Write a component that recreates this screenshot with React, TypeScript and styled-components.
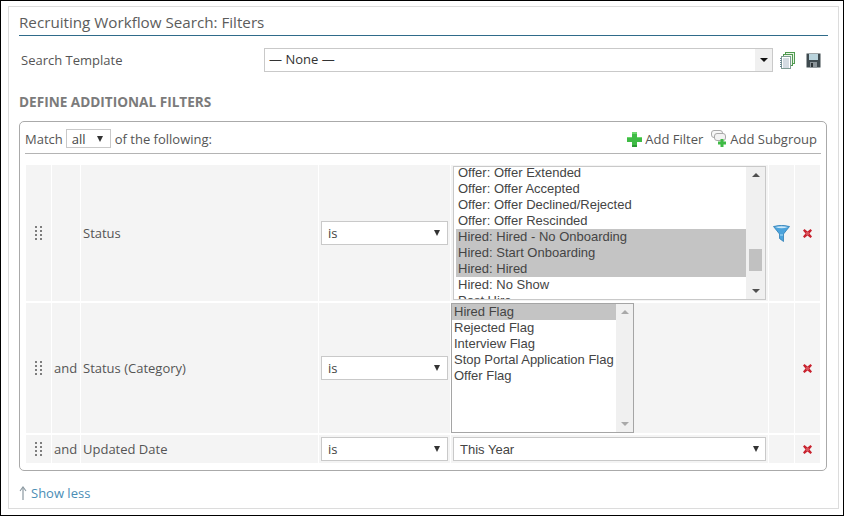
import styled, { createGlobalStyle } from 'styled-components'

const GlobalStyle = createGlobalStyle`
  html, body {
    margin: 0;
    padding: 0;
    background: #fff;
  }
  * {
    box-sizing: border-box;
  }
`;

const Page = styled.div`
  width: 844px;
  height: 516px;
  border: 1px solid #000;
  padding: 5px 4px 6px 7px;
  background: #fff;
  font-family: "Open Sans", sans-serif;
  font-size: 13px;
  color: #555;
`;

const Card = styled.div`
  height: 100%;
  border: 1px solid #dcdcdc;
  padding: 6px 10px 0 10px;
`;

const Title = styled.div`
  height: 23px;
  border-bottom: 1px solid #2f6b8a;
  font-size: 15.2px;
  line-height: 19px;
  color: #5c5c5c;
`;

const TemplateRow = styled.div`
  display: flex;
  align-items: center;
  margin-top: 12px;
  height: 24px;
  padding-left: 2px;
`;

const TemplateLabel = styled.div`
  width: 243px;
  color: #555;
`;

const TemplateIcons = styled.div`
  display: flex;
  align-items: center;
  gap: 11px;
  margin-left: 7px;
`;

const SectionHeading = styled.div`
  margin-top: 21px;
  font-size: 13.6px;
  line-height: 18px;
  font-weight: 700;
  color: #7b7b7b;
`;

const Panel = styled.div`
  margin-top: 10px;
  width: 808px;
  height: 350px;
  border: 1px solid #aaa;
  border-radius: 5px;
  padding: 0 5px;
`;

const PanelHead = styled.div`
  display: flex;
  align-items: center;
  justify-content: space-between;
  height: 32px;
  border-bottom: 1px solid #b4b4b4;
  padding-top: 2px;
`;

const MatchText = styled.div`
  display: flex;
  align-items: center;
  gap: 3px;
`;

const HeadActions = styled.div`
  display: flex;
  align-items: center;
  padding-right: 4px;
`;

const HeadAction = styled.span<{ $gap: number }>`
  display: flex;
  align-items: center;
  gap: ${props => props.$gap}px;
  margin-left: 8px;
`;

const Rows = styled.div`
  display: flex;
  flex-direction: column;
  row-gap: 2px;
  margin: 11px 0 0 1px;
`;

const Row = styled.div<{ $height: number }>`
  display: grid;
  grid-template-columns: 25px 28px 237px 131px 317px 25px 25px;
  column-gap: 1px;
  height: ${props => props.$height}px;
`;

const Cell = styled.div<{ $center?: boolean }>`
  display: flex;
  align-items: center;
  justify-content: ${props => (props.$center ? 'center' : 'flex-start')};
  background: #f4f4f4;
  overflow: hidden;
`;

const TextCell = styled(Cell)`
  padding-left: 2px;
  color: #555;
`;

const SelectCell = styled(Cell)`
  justify-content: center;
`;

const ValueCell = styled(Cell)`
  padding-left: 2px;
`;

const ListCell = styled(Cell)`
  align-items: flex-start;
`;

const SelectBox = styled.div<{ $width: number; $height?: number; $arial?: boolean }>`
  display: flex;
  align-items: center;
  justify-content: space-between;
  flex: none;
  width: ${props => props.$width}px;
  height: ${props => props.$height ?? 24}px;
  border: 1px solid #c9c9c9;
  background: #fff;
  padding: 0 ${props => (props.$arial ? 6 : 7)}px 0 6px;
  font-family: ${props => (props.$arial ? '"Liberation Sans", Arial, sans-serif' : 'inherit')};
  color: #444;
`;

const TemplateSelect = styled(SelectBox)`
  padding: 0 0 0 4px;
  color: #333;
`;

const TemplateValue = styled.span`
  padding-bottom: 2px;
`;

const ArrowBox = styled.span`
  display: flex;
  align-items: center;
  justify-content: center;
  width: 17px;
  height: 100%;
  background: #f0f0f0;
`;

const Arrow = styled.span`
  width: 0;
  height: 0;
  border-left: 3px solid transparent;
  border-right: 3px solid transparent;
  border-top: 6px solid #333;
`;

const SmallArrow = styled(Arrow)`
  border-left-width: 4px;
  border-right-width: 4px;
  border-top-width: 4px;
  border-top-color: #111;
`;

const MatchSelect = styled(SelectBox)`
  padding: 0 7px 0 5px;
  margin-right: 1px;
`;

const ListBox = styled.div<{ $width: number; $height: number; $dark?: boolean }>`
  display: flex;
  width: ${props => props.$width}px;
  height: ${props => props.$height}px;
  margin-top: ${props => (props.$dark ? 0 : 1)}px;
  margin-left: ${props => (props.$dark ? 0 : 2)}px;
  border: 1px solid ${props => (props.$dark ? '#a5a5a5' : '#c9c9c9')};
  background: #fff;
  overflow: hidden;
`;

const Options = styled.div<{ $offset: number; $inset: number }>`
  flex: 1;
  min-width: 0;
  margin-top: ${props => props.$offset}px;
  padding-left: ${props => props.$inset}px;
  font-family: "Liberation Sans", Arial, sans-serif;
  color: #444;
`;

const Option = styled.div<{ $selected?: boolean }>`
  height: 16px;
  line-height: 16px;
  padding-left: 2px;
  white-space: nowrap;
  background: ${props => (props.$selected ? '#c4c4c4' : 'transparent')};
`;

const Scrollbar = styled.div<{ $width: number }>`
  display: flex;
  flex-direction: column;
  justify-content: space-between;
  align-items: center;
  flex: none;
  width: ${props => props.$width}px;
  background: #f0f0f0;
`;

const ScrollTrack = styled.div`
  display: flex;
  flex: 1;
  width: 13px;
  flex-direction: column;
`;

const ScrollThumb = styled.div`
  width: 13px;
  height: 22px;
  margin-top: 66px;
  background: #c1c1c1;
`;

const ScrollButton = styled.span<{ $up?: boolean; $faded?: boolean }>`
  display: block;
  flex: none;
  margin: 6px 0;
  width: 0;
  height: 0;
  border-left: 4px solid transparent;
  border-right: 4px solid transparent;
  ${props =>
    props.$up
      ? `border-bottom: 4px solid ${props.$faded ? '#a9a9a9' : '#505050'};`
      : `border-top: 4px solid ${props.$faded ? '#a9a9a9' : '#505050'};`}
`;

const ShowLess = styled.div`
  display: flex;
  align-items: center;
  gap: 4px;
  margin-top: 12px;
  color: #4b8db5;
  line-height: 20px;
`;

function CopyIcon() {
  return (
    <svg width="15" height="17" viewBox="0 0 15 17">
      <rect x="5.5" y="0.5" width="9" height="11" fill="#e8f3e6" stroke="#4f9a4f" />
      <rect x="3.5" y="2.5" width="9" height="11" fill="#eef6ec" stroke="#4f9a4f" />
      <rect x="1.5" y="4.5" width="9" height="12" fill="#fff" stroke="#7f9c94" />
      <path d="M3 7h6M3 9h6M3 11h6M3 13h6M3 15h6" stroke="#a9b8c5" />
      <path d="M1 6v10" stroke="#6d8592" strokeDasharray="1 1" strokeWidth="2" />
    </svg>
  );
}

function SaveIcon() {
  return (
    <svg width="15" height="15" viewBox="0 0 15 15">
      <path d="M0.5 0.5h14v14h-14z" fill="#3f4a4f" />
      <rect x="3" y="1" width="9" height="6" fill="#b9d3dc" />
      <rect x="4" y="9" width="7" height="5.5" fill="#8b9499" />
      <rect x="5" y="10" width="2" height="4" fill="#2c3336" />
    </svg>
  );
}

function PlusIcon() {
  return (
    <svg width="15" height="16" viewBox="0 0 15 16">
      <path d="M5 1h5v5h5v5h-5v5H5v-5H0V6h5z" fill="#3fbb45" />
      <path d="M5 1h5v2H5zM0 6h5v1H0zM10 6h5v1h-5z" fill="#6cd86c" />
      <path d="M5 14h5v2H5z" fill="#2c9a34" />
    </svg>
  );
}

function SubgroupIcon() {
  return (
    <svg width="17" height="17" viewBox="0 0 17 17">
      <rect x="0.5" y="0.5" width="11" height="7" rx="2.5" fill="#f6f6f6" stroke="#a9a9a9" />
      <rect x="3.5" y="3.5" width="11" height="7" rx="2.5" fill="#f2f2f2" stroke="#a9a9a9" />
      <path d="M9.5 9h3v2.5H15v3h-2.5V17h-3v-2.5H7v-3h2.5z" fill="#3fbb45" />
    </svg>
  );
}

function FunnelIcon() {
  return (
    <svg width="17" height="17" viewBox="0 0 17 17">
      <path d="M0.5 1.5Q8.5 -1 16.5 1.5L10.5 9V16.5L6.5 13.5V9z" fill="#4ba3dc" stroke="#2f7db5" strokeWidth="0.8" />
      <path d="M2 2Q8.5 0.5 15 2Q8.5 4.5 2 2z" fill="#cde7f7" />
      <path d="M7 9H10V11H7z" fill="#7cc2ec" />
    </svg>
  );
}

function RemoveIcon() {
  return (
    <svg width="9" height="9" viewBox="0 0 9 9">
      <path d="M0 1.5L1.5 0L4.5 2.5L7.5 0L9 1.5L6.5 4.5L9 7.5L7.5 9L4.5 6.5L1.5 9L0 7.5L2.5 4.5z" fill="#c8222e" />
      <path d="M3 3h3v3H3z" fill="#d9515a" />
    </svg>
  );
}

function DragHandle() {
  return (
    <svg width="7" height="15" viewBox="0 0 7 15">
      <path d="M0 0h2v2H0zM5 0h2v2H5zM0 4h2v2H0zM5 4h2v2H5zM0 8h2v2H0zM5 8h2v2H5zM0 12h2v2H0zM5 12h2v2H5z" fill="#7d7d7d" />
    </svg>
  );
}

function UpArrowIcon() {
  return (
    <svg width="8" height="14" viewBox="0 0 8 14">
      <path d="M4 1.5V14" stroke="#8a98a0" strokeWidth="1.2" />
      <path d="M1 5L4 1L7 5" fill="none" stroke="#8a98a0" strokeWidth="1.1" />
    </svg>
  );
}

const statuses = [
  { label: 'Offer: Offer Extended' },
  { label: 'Offer: Offer Accepted' },
  { label: 'Offer: Offer Declined/Rejected' },
  { label: 'Offer: Offer Rescinded' },
  { label: 'Hired: Hired - No Onboarding', selected: true },
  { label: 'Hired: Start Onboarding', selected: true },
  { label: 'Hired: Hired', selected: true },
  { label: 'Hired: No Show' },
  { label: 'Post Hire' },
];

const categories = [
  { label: 'Hired Flag', selected: true },
  { label: 'Rejected Flag' },
  { label: 'Interview Flag' },
  { label: 'Stop Portal Application Flag' },
  { label: 'Offer Flag' },
];

function IsSelect() {
  return (
    <SelectBox $width={127}>
      is
      <Arrow />
    </SelectBox>
  );
}

function App() {
  return (
    <>
      <GlobalStyle />
      <Page>
        <Card>
          <Title>Recruiting Workflow Search: Filters</Title>
          <TemplateRow>
            <TemplateLabel>Search Template</TemplateLabel>
            <TemplateSelect $width={509}>
              <TemplateValue>— None —</TemplateValue>
              <ArrowBox>
                <SmallArrow />
              </ArrowBox>
            </TemplateSelect>
            <TemplateIcons>
              <CopyIcon />
              <SaveIcon />
            </TemplateIcons>
          </TemplateRow>
          <SectionHeading>DEFINE ADDITIONAL FILTERS</SectionHeading>
          <Panel>
            <PanelHead>
              <MatchText>
                Match
                <MatchSelect $width={45} $height={19}>
                  all
                  <Arrow />
                </MatchSelect>
                of the following:
              </MatchText>
              <HeadActions>
                <HeadAction $gap={3}>
                  <PlusIcon />
                  Add Filter
                </HeadAction>
                <HeadAction $gap={2}>
                  <SubgroupIcon />
                  Add Subgroup
                </HeadAction>
              </HeadActions>
            </PanelHead>
            <Rows>
              <Row $height={136}>
                <Cell $center><DragHandle /></Cell>
                <TextCell />
                <TextCell>Status</TextCell>
                <SelectCell><IsSelect /></SelectCell>
                <ListCell>
                  <ListBox $width={313} $height={134}>
                    <Options $offset={-2} $inset={2}>
                      {statuses.map(item => (
                        <Option key={item.label} $selected={item.selected}>{item.label}</Option>
                      ))}
                    </Options>
                    <Scrollbar $width={19}>
                      <ScrollButton $up />
                      <ScrollTrack><ScrollThumb /></ScrollTrack>
                      <ScrollButton />
                    </Scrollbar>
                  </ListBox>
                </ListCell>
                <Cell $center><FunnelIcon /></Cell>
                <Cell $center><RemoveIcon /></Cell>
              </Row>
              <Row $height={130}>
                <Cell $center><DragHandle /></Cell>
                <TextCell>and</TextCell>
                <TextCell>Status (Category)</TextCell>
                <SelectCell><IsSelect /></SelectCell>
                <ListCell>
                  <ListBox $width={183} $height={130} $dark>
                    <Options $offset={0} $inset={0}>
                      {categories.map(item => (
                        <Option key={item.label} $selected={item.selected}>{item.label}</Option>
                      ))}
                    </Options>
                    <Scrollbar $width={17}>
                      <ScrollButton $up $faded />
                      <ScrollButton $faded />
                    </Scrollbar>
                  </ListBox>
                </ListCell>
                <Cell />
                <Cell $center><RemoveIcon /></Cell>
              </Row>
              <Row $height={28}>
                <Cell $center><DragHandle /></Cell>
                <TextCell>and</TextCell>
                <TextCell>Updated Date</TextCell>
                <SelectCell><IsSelect /></SelectCell>
                <ValueCell>
                  <SelectBox $width={313} $arial>
                    This Year
                    <Arrow />
                  </SelectBox>
                </ValueCell>
                <Cell />
                <Cell $center><RemoveIcon /></Cell>
              </Row>
            </Rows>
          </Panel>
          <ShowLess>
            <UpArrowIcon />
            Show less
          </ShowLess>
        </Card>
      </Page>
    </>
  );
}

export default App
